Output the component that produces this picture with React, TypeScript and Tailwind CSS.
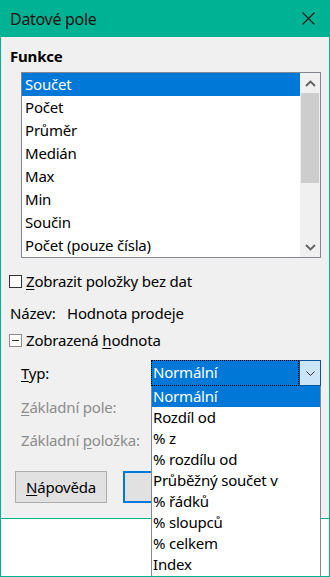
const font = "font-['Noto_Sans','Open_Sans',sans-serif]";

const functions = [
  "Součet",
  "Počet",
  "Průměr",
  "Medián",
  "Max",
  "Min",
  "Součin",
  "Počet (pouze čísla)",
];

const types = [
  "Normální",
  "Rozdíl od",
  "% z",
  "% rozdílu od",
  "Průběžný součet v",
  "% řádků",
  "% sloupců",
  "% celkem",
  "Index",
];

function Chevron({ up }: { up?: boolean }) {
  return (
    <svg width="11" height="7" viewBox="0 0 11 7" className="block">
      <path
        d={up ? "M1 6 L5.5 1.5 L10 6" : "M1 1 L5.5 5.5 L10 1"}
        fill="none"
        stroke="#606060"
        strokeWidth="1.8"
      />
    </svg>
  );
}

export default function App() {
  return (
    <div className={`relative w-[330px] h-[577px] overflow-hidden bg-white text-[15px] tracking-[-0.2px] text-black ${font}`}>
      {/* title bar */}
      <div className="h-[37px] bg-[#00b294] flex items-center justify-between pl-[10px] pr-[15px]">
        <span className="text-[16px] tracking-[-0.3px] text-[#121212] leading-none">Datové pole</span>
        <svg width="13" height="13" viewBox="0 0 13 13">
          <path d="M0.5 0.5 L12.5 12.5 M12.5 0.5 L0.5 12.5" stroke="#1a1a1a" strokeWidth="1.1" />
        </svg>
      </div>

      {/* body */}
      <div className="h-[482px] bg-[#f0f0f0] border-x border-b border-[#00b294] flex flex-col">
        <div className="pt-[8px] pl-[9px] leading-[22px] font-bold">Funkce</div>

        {/* function list */}
        <div className="mt-[5px] ml-[20px] w-[300px] h-[186px] border border-[#828790] bg-white flex">
          <div className="flex-1 flex flex-col">
            {functions.map((f, i) => (
              <div
                key={f}
                className={`h-[23px] leading-[23px] pl-[3px] ${i === 0 ? "bg-[#0078d7] text-white" : ""}`}
              >
                {f}
              </div>
            ))}
          </div>
          <div className="w-[20px] bg-[#f0f0f0] flex flex-col">
            <div className="h-[20px] flex items-center justify-center">
              <Chevron up />
            </div>
            <div className="h-[90px] mx-[1px] bg-[#cdcdcd]" />
            <div className="flex-1" />
            <div className="h-[20px] flex items-center justify-center">
              <Chevron />
            </div>
          </div>
        </div>

        {/* checkbox */}
        <div className="mt-[12px] h-[22px] flex items-center pl-[8px]">
          <span className="w-[13px] h-[13px] border border-[#333] bg-white" />
          <span className="ml-[4px]">
            <span className="underline underline-offset-2">Z</span>obrazit položky bez dat
          </span>
        </div>

        {/* name */}
        <div className="mt-[10px] h-[22px] flex items-center pl-[9px]">
          <span className="w-[57px]">Název:</span>
          <span>Hodnota prodeje</span>
        </div>

        {/* expander */}
        <div className="mt-[5px] h-[22px] flex items-center pl-[8px]">
          <span className="w-[13px] h-[13px] border border-[#8a8a8a] bg-white flex items-center justify-center">
            <span className="w-[7px] h-px bg-[#333]" />
          </span>
          <span className="ml-[4px]">
            Zobrazená <span className="underline underline-offset-2">h</span>odnota
          </span>
        </div>

        {/* type */}
        <div className="mt-[9px] h-[26px] flex items-center">
          <span className="w-[150px] pl-[20px]">
            <span className="underline underline-offset-2">T</span>yp:
          </span>
          <div className="w-[170px] h-[26px] flex">
            <div className="flex-1 bg-[#0078d7] text-white border border-dotted border-black leading-[22px] pl-[1px]">
              Normální
            </div>
            <div className="w-[22px] bg-[#cce4f7] border border-[#005499] flex items-center justify-center">
              <svg width="9" height="5" viewBox="0 0 9 5">
                <path d="M0.5 0.5 L4.5 4.5 L8.5 0.5" fill="none" stroke="#333" strokeWidth="1" />
              </svg>
            </div>
          </div>
        </div>

        <div className="mt-[10px] h-[22px] flex items-center pl-[20px] text-[#8c8c8c]">
          <span>
            <span className="underline underline-offset-2">Z</span>ákladní pole:
          </span>
        </div>
        <div className="mt-[11px] h-[22px] flex items-center pl-[20px] text-[#8c8c8c]">
          <span>
            Základní <span className="underline underline-offset-2">p</span>oložka:
          </span>
        </div>

        {/* buttons */}
        <div className="mt-[20px] flex gap-[16px] pl-[14px]">
          <div className="w-[92px] h-[32px] bg-[#e1e1e1] border border-[#adadad] flex items-center justify-center">
            <span>
              <span className="underline underline-offset-2">N</span>ápověda
            </span>
          </div>
          <div className="w-[92px] h-[32px] bg-[#e1e1e1] border-2 border-[#0078d7]" />
        </div>
      </div>

      {/* lower area */}
      <div className="h-[58px] border-x border-b border-[#00b294] bg-white" />

      {/* open dropdown popup */}
      <div className="absolute left-[151px] top-[386px] w-[170px] h-[190px] bg-white border-x border-[#828790] flex flex-col">
        {types.map((t, i) => (
          <div
            key={t}
            className={`h-[21px] leading-[21px] pl-[1px] ${i === 0 ? "bg-[#0078d7] text-white" : ""}`}
          >
            {t}
          </div>
        ))}
      </div>
    </div>
  );
}
